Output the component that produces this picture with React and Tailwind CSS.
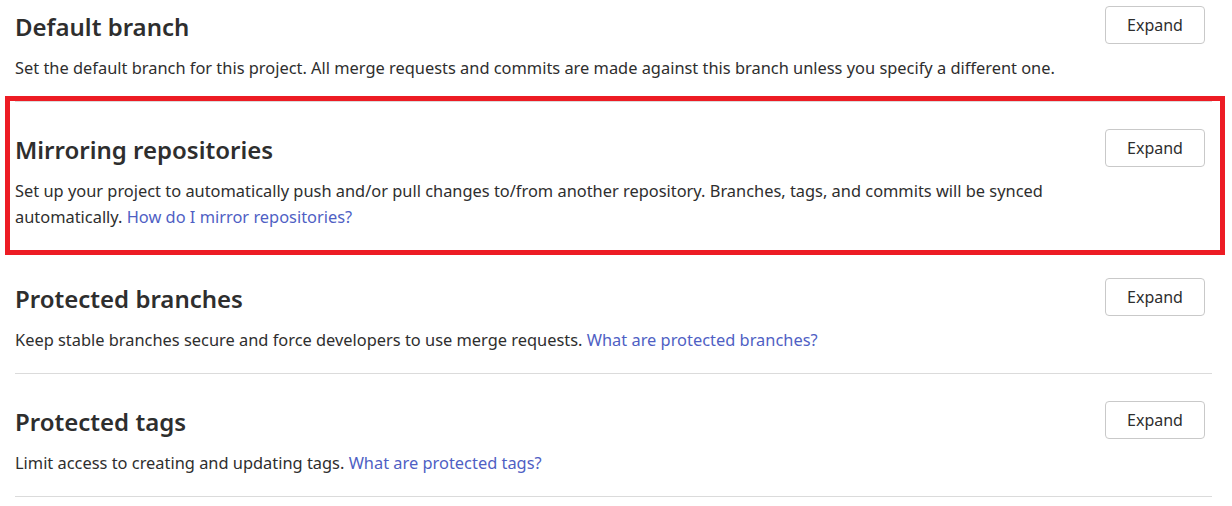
import React from "react";

function Section({ title, children, first, highlight }) {
  return (
    <section
      className={`relative border-b border-[#dbdbdb] pb-[20px] ${first ? "pt-[6px]" : "pt-[27px]"}`}
    >
      {highlight && (
        <div className="pointer-events-none absolute -top-[6px] -bottom-[5px] -left-[10px] -right-[13px] border-[5px] border-[#ed1c24]" />
      )}
      <div className="flex items-start justify-between">
        <div className="flex-1 pr-[40px]">
          <h4 className="mt-[5px] text-[24px] leading-[32px] font-semibold text-[#2e2e2e]">{title}</h4>
          <p className="mt-[12px] text-[16.4px] leading-[26px] text-[#2e2e2e]">{children}</p>
        </div>
        <button className="mr-[7px] h-[38px] w-[100px] shrink-0 rounded-[4px] border border-[#c9c9c9] bg-white text-[16px] text-[#2e2e2e]">
          Expand
        </button>
      </div>
    </section>
  );
}

const Link = ({ children }) => <a className="text-[#4f5fc4]" href="#">{children}</a>;

export default function App() {
  return (
    <div className="h-[506px] overflow-hidden bg-white px-[15px] font-['Noto_Sans',sans-serif] w-[1227px]">
      <Section title="Default branch" first>
        Set the default branch for this project. All merge requests and commits are made against this branch unless you specify a different one.
      </Section>
      <Section title="Mirroring repositories" highlight>
        Set up your project to automatically push and/or pull changes to/from another repository. Branches, tags, and commits will be synced automatically.{" "}
        <Link>How do I mirror repositories?</Link>
      </Section>
      <Section title="Protected branches">
        Keep stable branches secure and force developers to use merge requests. <Link>What are protected branches?</Link>
      </Section>
      <Section title="Protected tags">
        Limit access to creating and updating tags. <Link>What are protected tags?</Link>
      </Section>
    </div>
  );
}
